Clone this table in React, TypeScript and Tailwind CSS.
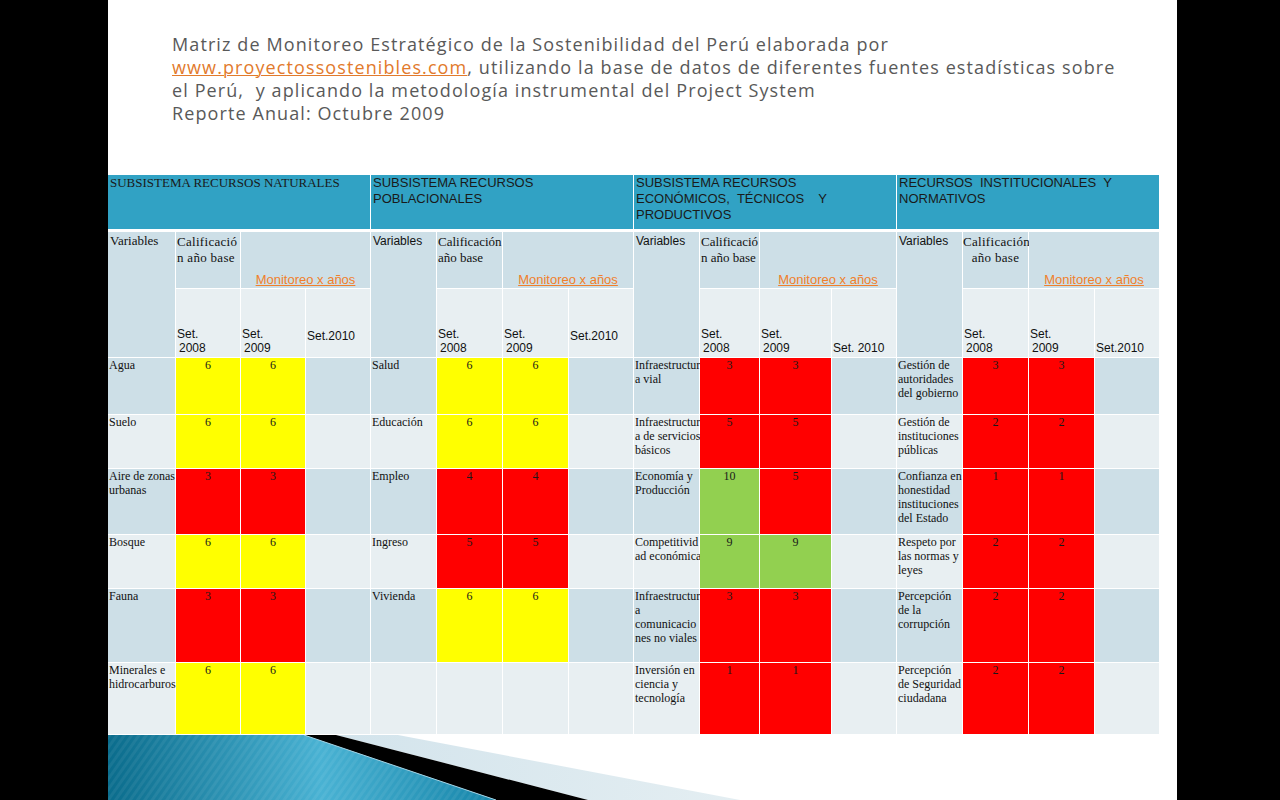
import React from 'react'

type Tone = 'y' | 'r' | 'g' | ''

const cols =
  'grid-cols-[68px_65px_65px_65px_66px_66px_66px_65px_66px_60px_72px_65px_66px_66px_66px_65px]'

const rowHeights = [57, 54, 66, 54, 74, 72]

const groups: { vars: string[][]; vals: [string, Tone, string, Tone][] }[] = [
  {
    vars: [['Agua'], ['Suelo'], ['Aire de zonas', 'urbanas'], ['Bosque'], ['Fauna'], ['Minerales e', 'hidrocarburos']],
    vals: [
      ['6', 'y', '6', 'y'],
      ['6', 'y', '6', 'y'],
      ['3', 'r', '3', 'r'],
      ['6', 'y', '6', 'y'],
      ['3', 'r', '3', 'r'],
      ['6', 'y', '6', 'y'],
    ],
  },
  {
    vars: [['Salud'], ['Educación'], ['Empleo'], ['Ingreso'], ['Vivienda'], []],
    vals: [
      ['6', 'y', '6', 'y'],
      ['6', 'y', '6', 'y'],
      ['4', 'r', '4', 'r'],
      ['5', 'r', '5', 'r'],
      ['6', 'y', '6', 'y'],
      ['', '', '', ''],
    ],
  },
  {
    vars: [
      ['Infraestructur', 'a vial'],
      ['Infraestructur', 'a de servicios', 'básicos'],
      ['Economía y', 'Producción'],
      ['Competitivid', 'ad económica'],
      ['Infraestructur', 'a', 'comunicacio', 'nes no viales'],
      ['Inversión en', 'ciencia y', 'tecnología'],
    ],
    vals: [
      ['3', 'r', '3', 'r'],
      ['5', 'r', '5', 'r'],
      ['10', 'g', '5', 'r'],
      ['9', 'g', '9', 'g'],
      ['3', 'r', '3', 'r'],
      ['1', 'r', '1', 'r'],
    ],
  },
  {
    vars: [
      ['Gestión de', 'autoridades', 'del gobierno'],
      ['Gestión de', 'instituciones', 'públicas'],
      ['Confianza en', 'honestidad', 'instituciones', 'del Estado'],
      ['Respeto por', 'las normas y', 'leyes'],
      ['Percepción', 'de la', 'corrupción'],
      ['Percepción', 'de Seguridad', 'ciudadana'],
    ],
    vals: [
      ['3', 'r', '3', 'r'],
      ['2', 'r', '2', 'r'],
      ['1', 'r', '1', 'r'],
      ['2', 'r', '2', 'r'],
      ['2', 'r', '2', 'r'],
      ['2', 'r', '2', 'r'],
    ],
  },
]

const serif = "font-['Liberation_Serif',serif]"
const sans = "font-['Liberation_Sans',Arial,sans-serif]"

function toneBg(t: Tone, dark: boolean) {
  if (t === 'y') return 'bg-[#ffff00]'
  if (t === 'r') return 'bg-[#ff0000]'
  if (t === 'g') return 'bg-[#92d050]'
  return dark ? 'bg-[#cddfe7]' : 'bg-[#e8eff2]'
}

function Lines({ lines }: { lines: string[] }) {
  return (
    <>
      {lines.map((l, i) => (
        <div key={i} className="whitespace-pre">
          {l}
        </div>
      ))}
    </>
  )
}

function HeaderBand() {
  const titles = [
    { lines: ['SUBSISTEMA RECURSOS NATURALES'], font: serif },
    { lines: ['SUBSISTEMA RECURSOS', 'POBLACIONALES'], font: sans },
    { lines: ['SUBSISTEMA RECURSOS', 'ECONÓMICOS,  TÉCNICOS    Y', 'PRODUCTIVOS'], font: sans },
    { lines: ['RECURSOS  INSTITUCIONALES  Y', 'NORMATIVOS'], font: sans },
  ]
  return (
    <div className="grid grid-cols-[263px_263px_263px_263px] h-[57px] border-b-[3px] border-white">
      {titles.map((t, i) => (
        <div
          key={i}
          className={`${t.font} bg-[#31a2c4] border-r border-white pl-[2px] text-[13px] leading-[16px] text-[#1a1a1a]`}
        >
          <Lines lines={t.lines} />
        </div>
      ))}
    </div>
  )
}

function GroupHead({ g }: { g: number }) {
  const calif =
    g === 0 ? (
      <div className="pl-[1px] pt-[2px] tracking-[0.3px]">
        <div>Calificació</div>
        <div>n año base</div>
      </div>
    ) : g === 2 ? (
      <div className="pl-[1px] pt-[2px]">
        <div>Calificació</div>
        <div>n año base</div>
      </div>
    ) : g === 1 ? (
      <div className="pl-[1px] pt-[2px]">
        <div>Calificación</div>
        <div>año base</div>
      </div>
    ) : (
      <div className="pt-[2px] text-center tracking-[0.3px]">
        <div>Calificación</div>
        <div>año base</div>
      </div>
    )
  const y2010 = g === 2 ? 'Set. 2010' : 'Set.2010'
  const lift = g < 2 ? 'pb-[14px]' : 'pb-[2px]'
  return (
    <>
      <div
        className={`${g === 0 ? serif + ' text-[13px]' : sans + ' text-[12px]'} row-span-2 bg-[#cddfe7] border-r border-b border-white pl-[2px] leading-[16px] pt-[1px] text-[#111]`}
      >
        Variables
      </div>
      <div className={`${serif} bg-[#cddfe7] border-r border-b border-white text-[13px] leading-[16px] text-[#111]`}>
        {calif}
      </div>
      <div
        className={`${sans} col-span-2 bg-[#cddfe7] border-r border-b border-white flex items-end justify-center pb-[1px] text-[13px] leading-[15px] text-[#f07f2c] underline`}
      >
        Monitoreo x años
      </div>
      {['2008', '2009'].map((y) => (
        <div
          key={y}
          className={`${sans} bg-[#e8eff2] border-r border-b border-white flex flex-col justify-end pl-[1px] pb-[2px] text-[12px] leading-[14px] text-[#111]`}
        >
          <div>Set.</div>
          <div className="pl-[2px]">{y}</div>
        </div>
      ))}
      <div
        className={`${sans} bg-[#e8eff2] border-r border-b border-white flex flex-col justify-end pl-[1px] ${lift} text-[12px] leading-[14px] text-[#111]`}
      >
        {y2010}
      </div>
    </>
  )
}

function Table() {
  return (
    <div className="w-[1052px] shrink-0">
      <HeaderBand />
      <div className="grid grid-cols-[263px_263px_263px_263px]">
        {[0, 1, 2, 3].map((g) => (
          <div
            key={g}
            className={`grid grid-rows-[57px_69px] ${
              g === 2
                ? 'grid-cols-[66px_60px_72px_65px]'
                : g === 0
                  ? 'grid-cols-[68px_65px_65px_65px]'
                  : 'grid-cols-[66px_66px_66px_65px]'
            }`}
          >
            <GroupHead g={g} />
          </div>
        ))}
      </div>
      <div className={`grid ${cols}`}>
        {rowHeights.map((h, r) => {
          const dark = r % 2 === 0
          return groups.map((gr, g) => {
            const [a, ta, b, tb] = gr.vals[r]
            const base = dark ? 'bg-[#cddfe7]' : 'bg-[#e8eff2]'
            return (
              <React.Fragment key={`${r}-${g}`}>
                <div
                  style={{ height: h }}
                  className={`${serif} ${base} border-r border-b border-white pl-[1px] text-[12px] leading-[14px] text-[#111]`}
                >
                  <Lines lines={gr.vars[r]} />
                </div>
                <div
                  className={`${serif} ${toneBg(ta, dark)} border-r border-b border-white text-center text-[12px] leading-[14px] text-[#1a1a1a]`}
                >
                  {a}
                </div>
                <div
                  className={`${serif} ${toneBg(tb, dark)} border-r border-b border-white text-center text-[12px] leading-[14px] text-[#1a1a1a]`}
                >
                  {b}
                </div>
                <div className={`${base} border-r border-b border-white`} />
              </React.Fragment>
            )
          })
        })}
      </div>
    </div>
  )
}

function Swoosh() {
  return (
    <svg width="1069" height="65" viewBox="0 0 1069 65" className="block shrink-0">
      <defs>
        <linearGradient id="bl" x1="0" y1="0" x2="1" y2="0">
          <stop offset="0" stopColor="#0a6c8c" />
          <stop offset="0.55" stopColor="#49b2d3" />
          <stop offset="1" stopColor="#1685a9" />
        </linearGradient>
        <linearGradient id="lt" x1="0" y1="0" x2="1" y2="0">
          <stop offset="0" stopColor="#d3e4ec" />
          <stop offset="1" stopColor="#e4eef2" />
        </linearGradient>
        <pattern id="st" width="6" height="6" patternUnits="userSpaceOnUse" patternTransform="rotate(35)">
          <rect width="3" height="6" fill="#ffffff" opacity="0.06" />
        </pattern>
      </defs>
      <polygon points="228,0 290,0 632,65 480,65" fill="url(#lt)" />
      <polygon points="0,0 196,0 388,65 0,65" fill="url(#bl)" />
      <polygon points="0,0 196,0 388,65 0,65" fill="url(#st)" />
      <polygon points="196,0 228,0 480,65 388,65" fill="#000" />
      <line x1="196" y1="0" x2="388" y2="65" stroke="#9fd3e6" strokeWidth="1" />
    </svg>
  )
}

export default function App() {
  return (
    <div className="w-[1280px] h-[800px] bg-black flex overflow-hidden">
      <div className="ml-[108px] w-[1069px] h-[800px] bg-white flex flex-col">
        <div className="h-[175px] shrink-0 pl-[64px] pt-[33px] font-['Open_Sans',sans-serif] text-[18px] leading-[23px] tracking-[1.1px] text-[#595959]">
          <div className="whitespace-nowrap">Matriz de Monitoreo Estratégico de la Sostenibilidad del Perú elaborada por</div>
          <div className="whitespace-nowrap">
            <span className="text-[#e27a2c] underline decoration-1">www.proyectossostenibles.com</span>, utilizando la base de
            datos de diferentes fuentes estadísticas sobre
          </div>
          <div className="whitespace-pre">el Perú,  y aplicando la metodología instrumental del Project System</div>
          <div className="whitespace-nowrap">Reporte Anual: Octubre 2009</div>
        </div>
        <Table />
        <Swoosh />
      </div>
    </div>
  )
}
